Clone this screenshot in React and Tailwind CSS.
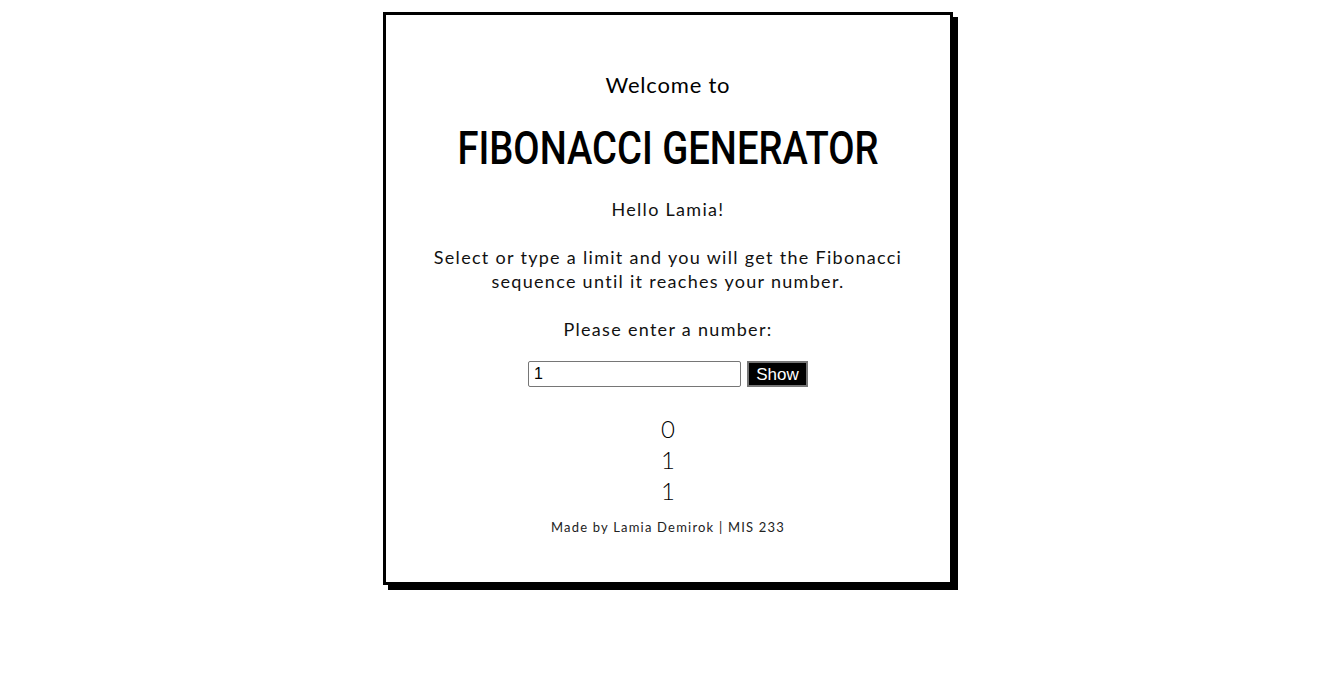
import React, { useState } from "react";

const fib = (limit) => {
  const out = [0];
  let a = 0;
  let b = 1;
  while (b <= limit) {
    out.push(b);
    [a, b] = [b, a + b];
  }
  return out;
};

const App = () => {
  const [value, setValue] = useState("1");
  const [numbers, setNumbers] = useState(fib(1));

  return (
    <div className="min-h-screen bg-white pt-[12px] pr-[3px]">
      {/* card */}
      <div className="mx-auto w-[570px] border-[3px] border-black bg-white shadow-[5px_5px_0_#000] pt-[57px] pb-[47px] text-center text-black font-['Lato','Open_Sans',sans-serif]">
        <h3 className="text-[22px] leading-[26px] font-normal tracking-[0.8px]">Welcome to</h3>

        <h1 className="mt-[23px] text-[46px] leading-[54px] font-medium scale-x-[0.83] font-['Roboto',sans-serif]">
          FIBONACCI GENERATOR
        </h1>

        <p className="mt-[22px] text-[18px] leading-[24px] font-normal tracking-[1.3px] text-[#111]">
          Hello Lamia!
        </p>

        <p className="mt-[24px] px-[30px] text-[18px] leading-[24px] font-normal tracking-[1.3px] text-[#111]">
          Select or type a limit and you will get the Fibonacci sequence until
          it reaches your number.
        </p>

        <p className="mt-[24px] text-[18px] leading-[24px] font-normal tracking-[1.3px] text-[#111]">
          Please enter a number:
        </p>

        {/* input row */}
        <div className="mt-[20px] flex justify-center gap-[6px]">
          <input
            type="text"
            value={value}
            onChange={(e) => setValue(e.target.value)}
            className="w-[213px] h-[26px] border border-[#767676] rounded-[2px] px-[5px] text-[16px] font-['Liberation_Sans',Arial,sans-serif] text-black outline-none"
          />
          <button
            onClick={() => setNumbers(fib(Number(value) || 0))}
            className="w-[61px] h-[26px] bg-black text-white border-2 border-[#767676] text-[17px] leading-none font-['Liberation_Sans',Arial,sans-serif]"
          >
            Show
          </button>
        </div>

        {/* results */}
        <div className="mt-[26px] text-[24px] leading-[31px] font-light">
          {numbers.map((n, i) => (
            <div key={i}>{n}</div>
          ))}
        </div>

        <p className="mt-[13px] text-[13px] leading-[16px] font-normal tracking-[1.2px] text-[#222]">
          Made by Lamia Demirok | MIS 233
        </p>
      </div>
    </div>
  );
};

export default App;
